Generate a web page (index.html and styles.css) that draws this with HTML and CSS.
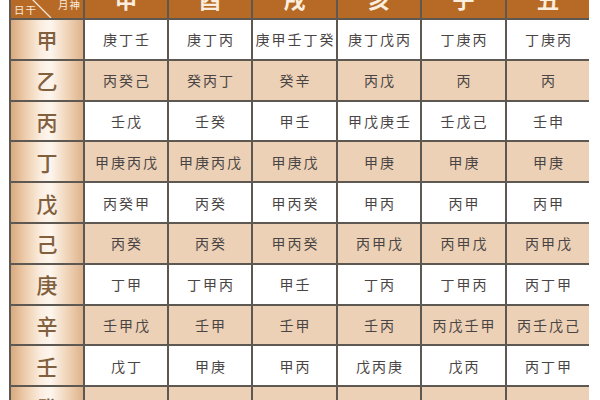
FILE: index.html
```html
<!DOCTYPE html>
<html lang="zh">
<head>
<meta charset="utf-8">
<link rel="stylesheet" href="styles.css">
</head>
<body>
<div class="sheet">
  <div class="grid">
    <div class="corner">
      <svg class="diag" width="72" height="38" viewBox="0 0 72 38"><line x1="2" y1="0" x2="40" y2="38" stroke="#f6e6d4" stroke-width="1.3"/></svg>
      <span class="c-top">月神</span>
      <span class="c-bot">日干</span>
    </div>
    <div class="hd">申</div><div class="hd">酉</div><div class="hd">戌</div><div class="hd">亥</div><div class="hd">子</div><div class="hd">丑</div>

    <div class="stem">甲</div><div class="c">庚丁壬</div><div class="c">庚丁丙</div><div class="c">庚甲壬丁癸</div><div class="c">庚丁戊丙</div><div class="c">丁庚丙</div><div class="c">丁庚丙</div>
    <div class="stem">乙</div><div class="c t">丙癸己</div><div class="c t">癸丙丁</div><div class="c t">癸辛</div><div class="c t">丙戊</div><div class="c t">丙</div><div class="c t">丙</div>
    <div class="stem">丙</div><div class="c">壬戊</div><div class="c">壬癸</div><div class="c">甲壬</div><div class="c">甲戊庚壬</div><div class="c">壬戊己</div><div class="c">壬申</div>
    <div class="stem">丁</div><div class="c t">甲庚丙戊</div><div class="c t">甲庚丙戊</div><div class="c t">甲庚戊</div><div class="c t">甲庚</div><div class="c t">甲庚</div><div class="c t">甲庚</div>
    <div class="stem">戊</div><div class="c">丙癸甲</div><div class="c">丙癸</div><div class="c">甲丙癸</div><div class="c">甲丙</div><div class="c">丙甲</div><div class="c">丙甲</div>
    <div class="stem">己</div><div class="c t">丙癸</div><div class="c t">丙癸</div><div class="c t">甲丙癸</div><div class="c t">丙甲戊</div><div class="c t">丙甲戊</div><div class="c t">丙甲戊</div>
    <div class="stem">庚</div><div class="c">丁甲</div><div class="c">丁甲丙</div><div class="c">甲壬</div><div class="c">丁丙</div><div class="c">丁甲丙</div><div class="c">丙丁甲</div>
    <div class="stem">辛</div><div class="c t">壬甲戊</div><div class="c t">壬甲</div><div class="c t">壬甲</div><div class="c t">壬丙</div><div class="c t">丙戊壬甲</div><div class="c t">丙壬戊己</div>
    <div class="stem">壬</div><div class="c">戊丁</div><div class="c">甲庚</div><div class="c">甲丙</div><div class="c">戊丙庚</div><div class="c">戊丙</div><div class="c">丙丁甲</div>
    <div class="stem">癸</div><div class="c t">丁</div><div class="c t">辛丙</div><div class="c t">辛甲壬癸</div><div class="c t">庚辛戊丁</div><div class="c t">丙辛</div><div class="c t">丙丁</div>
  </div>
</div>
</body>
</html>
```
FILE: styles.css
```css
html, body {
  margin: 0;
  padding: 0;
  background: #ffffff;
}
body {
  width: 600px;
  height: 400px;
  overflow: hidden;
  font-family: "Noto Sans CJK SC", "Noto Sans", sans-serif;
}
.sheet {
  padding-left: 9px;
}
.grid {
  margin-top: -22px;
  width: 580px;
  display: grid;
  grid-template-columns: 72px 82px 82px 83px 82px 83px 82px;
  grid-template-rows: 38px repeat(10, 38.8px);
  gap: 2px;
  padding: 2px;
  box-sizing: border-box;
  background: #5e5852;
}
.corner {
  position: relative;
  background: #b76a26;
  overflow: hidden;
}
.diag {
  position: absolute;
  left: 0;
  top: 0;
}
.c-top, .c-bot {
  position: absolute;
  font-size: 10.5px;
  line-height: 1;
  color: #f8ebdc;
  letter-spacing: 1px;
}
.c-top {
  right: 2px;
  top: 20px;
}
.c-bot {
  left: 3px;
  bottom: 3px;
}
.hd {
  background: #b76a26;
  color: #fbeedf;
  font-size: 22px;
  font-weight: 700;
  display: flex;
  align-items: center;
  justify-content: center;
  padding-bottom: 2px;
  box-sizing: border-box;
}
.stem {
  background: linear-gradient(90deg, #d8a97f 0%, #eccaa8 18%, #fbeee1 42%, #fdf6ee 55%, #f0d4b8 78%, #ddb38c 100%);
  color: #82603d;
  font-size: 21px;
  font-weight: 500;
  display: flex;
  align-items: center;
  justify-content: center;
}
.c {
  background: #ffffff;
  color: #4a4545;
  font-size: 14px;
  letter-spacing: 2px;
  text-indent: 2px;
  display: flex;
  align-items: center;
  justify-content: center;
  white-space: nowrap;
}
.c.t {
  background: #ecd1b6;
}
```
